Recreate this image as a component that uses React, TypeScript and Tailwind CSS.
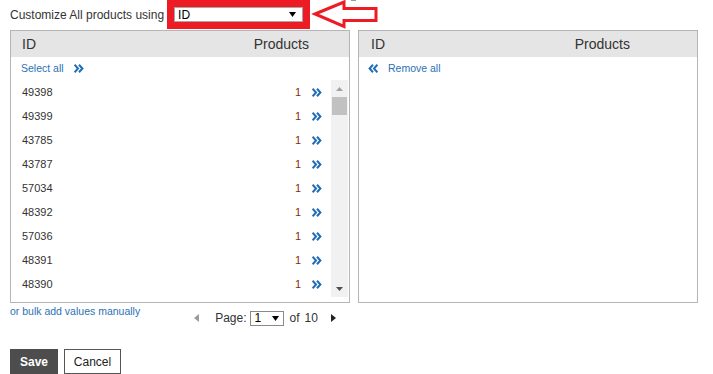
import React from "react";

const Chev = ({ left = false }: { left?: boolean }) => (
  <svg width="10" height="9" viewBox="0 0 10 9" className="block">
    {left ? (
      <g fill="none" stroke="#1f6db4" strokeWidth="2">
        <polyline points="5,0.8 1.6,4.5 5,8.2" />
        <polyline points="9.4,0.8 6,4.5 9.4,8.2" />
      </g>
    ) : (
      <g fill="none" stroke="#1f6db4" strokeWidth="2">
        <polyline points="0.6,0.8 4,4.5 0.6,8.2" />
        <polyline points="5,0.8 8.4,4.5 5,8.2" />
      </g>
    )}
  </svg>
);

const rows = ["49398", "49399", "43785", "43787", "57034", "48392", "57036", "48391", "48390"];

export default function App() {
  return (
    <div className="w-[713px] h-[374px] overflow-hidden bg-white text-[#333] font-['Liberation_Sans',Arial,sans-serif]">
      {/* top row */}
      <div className="flex items-center h-[29px] pl-[10px]">
        <span className="text-[12px] leading-none">Customize All products using</span>
        <div className="ml-[3px] w-[143px] h-[29px] border-[7px] border-[#ed1c24] box-border">
          <div className="h-[15px] w-full bg-white border border-[#a6a6a6] flex items-center justify-between pl-[3px] pr-[6px]">
            <span className="text-[12px] leading-none text-black">ID</span>
            <svg width="7" height="5" viewBox="0 0 7 5"><polygon points="0,0 7,0 3.5,5" fill="#000" /></svg>
          </div>
        </div>
        <svg width="75" height="29" viewBox="0 0 75 29" className="block self-start">
          <polygon points="5,14 34,2 34,8.5 66,8.5 66,20.5 34,20.5 34,26.5" fill="none" stroke="#ed1c24" strokeWidth="3" strokeLinejoin="miter" />
          <rect x="41" y="0" width="5" height="1" fill="#9a9a9a" />
        </svg>
      </div>

      {/* panels */}
      <div className="flex gap-[8px] pl-[10px] mt-[1px]">
        {/* left panel */}
        <div className="w-[340px] h-[273px] border border-[#b5b5b5] flex flex-col">
          <div className="h-[26px] bg-[#e5e5e5] flex items-center justify-between pl-[11px] pr-[40px] text-[14px]">
            <span>ID</span>
            <span>Products</span>
          </div>
          <div className="h-[23px] flex items-center pl-[10px] text-[10.5px] text-[#2a72b5]">
            <span>Select all</span>
            <span className="ml-[10px]"><Chev /></span>
          </div>
          <div className="flex h-[217px] mr-[1px]">
            <div className="flex-1 flex flex-col overflow-hidden">
              {rows.map((r) => (
                <div key={r} className="h-[24px] shrink-0 flex items-center pl-[11px] pr-[9px] text-[11px]">
                  <span className="flex-1">{r}</span>
                  <span className="text-[#8b2a0e]">1</span>
                  <span className="ml-[11px]"><Chev /></span>
                </div>
              ))}
            </div>
            <div className="w-[17px] bg-[#f1f1f1] flex flex-col items-center">
              <div className="h-[17px] flex items-center justify-center">
                <svg width="7" height="4" viewBox="0 0 7 4"><polygon points="0,4 7,4 3.5,0" fill="#a3a3a3" /></svg>
              </div>
              <div className="w-[15px] h-[18px] bg-[#c1c1c1]" />
              <div className="flex-1" />
              <div className="h-[17px] flex items-center justify-center">
                <svg width="7" height="4" viewBox="0 0 7 4"><polygon points="0,0 7,0 3.5,4" fill="#505050" /></svg>
              </div>
            </div>
          </div>
        </div>

        {/* right panel */}
        <div className="w-[340px] h-[273px] border border-[#b5b5b5] flex flex-col">
          <div className="h-[26px] bg-[#e5e5e5] flex items-center justify-between pl-[12px] pr-[67px] text-[14px]">
            <span>ID</span>
            <span>Products</span>
          </div>
          <div className="h-[23px] flex items-center pl-[9px] text-[10.5px] text-[#2a72b5]">
            <Chev left />
            <span className="ml-[10px]">Remove all</span>
          </div>
        </div>
      </div>

      {/* under panels */}
      <div className="flex items-start pl-[10px] h-[46px]">
        <div className="mt-[1px] text-[10.5px] text-[#2a72b5] leading-[14px]">or bulk add values manually</div>
        <div className="ml-[54px] mt-[6px] flex items-center text-[12px]">
          <svg width="5" height="8" viewBox="0 0 5 8"><polygon points="5,0 5,8 0,4" fill="#9a9a9a" /></svg>
          <span className="ml-[16px]">Page:</span>
          <div className="ml-[3px] w-[34px] h-[15px] border border-[#8a8a8a] flex items-center justify-between pl-[4px] pr-[4px]">
            <span className="text-[12px] leading-none text-black">1</span>
            <svg width="7" height="5" viewBox="0 0 7 5"><polygon points="0,0 7,0 3.5,5" fill="#000" /></svg>
          </div>
          <span className="ml-[6px]">of</span>
          <span className="ml-[5px]">10</span>
          <svg width="5" height="8" viewBox="0 0 5 8" className="ml-[13px]"><polygon points="0,0 0,8 5,4" fill="#222" /></svg>
        </div>
      </div>

      {/* buttons */}
      <div className="flex gap-[6px] pl-[10px]">
        <button className="w-[48px] h-[25px] bg-[#4d4d4d] text-white font-bold text-[12px]">Save</button>
        <button className="w-[57px] h-[25px] bg-white border border-[#555] text-[12px] text-[#222]">Cancel</button>
      </div>
    </div>
  );
}
